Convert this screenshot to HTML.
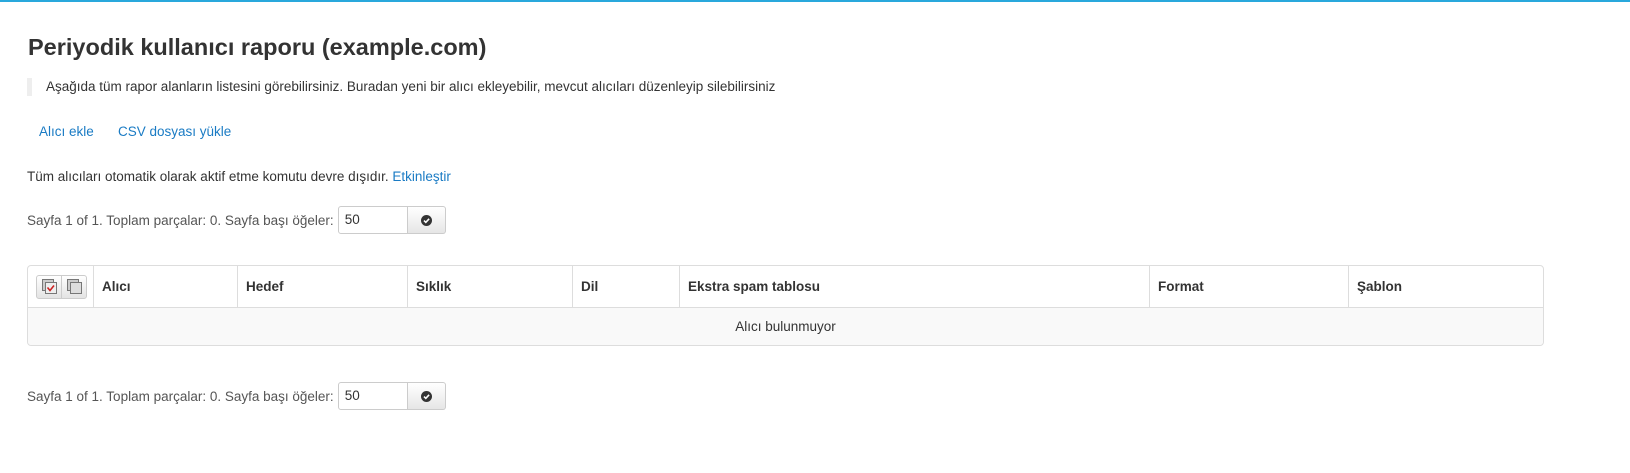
<!DOCTYPE html>
<html><head><meta charset="utf-8"><style>
body{margin:0;width:1630px;height:473px;background:#fff;font-family:"Liberation Sans",sans-serif;font-size:13.5px;color:#333;border-top:2px solid #29a8dc;box-sizing:border-box;position:relative;overflow:hidden}
.a{position:absolute;white-space:nowrap}
a{color:#1a7bc4;text-decoration:none}
h1{margin:0;font-size:23.5px;font-weight:bold;color:#333}
.pg{display:flex;align-items:center}
.inp{width:70px;height:28px;border:1px solid #ccc;border-radius:3px 0 0 3px;box-sizing:border-box;padding-left:6px;line-height:26px;margin-left:4px}
.btn{width:38px;height:28px;border:1px solid #ccc;border-left:none;border-radius:0 3px 3px 0;box-sizing:border-box;background:linear-gradient(#fff,#e6e6e6);display:flex;align-items:center;justify-content:center}
table{position:absolute;left:27px;top:263px;width:1517px;border-collapse:separate;border-spacing:0;border:1px solid #ddd;border-radius:4px;table-layout:fixed}
th{height:42px;text-align:left;padding:0 8px;font-weight:bold;border-left:1px solid #ddd;border-bottom:1px solid #ddd;box-sizing:border-box}
th:first-child{border-left:none}
td{height:35px;text-align:center;background:#f9f9f9;border-radius:0 0 4px 4px}
.cb{display:inline-flex;border:1px solid #ccc;border-radius:3px;background:linear-gradient(#fff,#e3e3e3);height:22px;vertical-align:middle}
.cb span{width:24px;display:flex;align-items:center;justify-content:center}
.cb span+span{border-left:1px solid #ccc}
</style></head><body>
<div class="a" style="left:28px;top:32px"><h1>Periyodik kullanıcı raporu (example.com)</h1></div>
<div class="a" style="left:27px;top:76px;height:18px;border-left:5px solid #eee;padding-left:14px;line-height:18px">Aşağıda tüm rapor alanların listesini görebilirsiniz. Buradan yeni bir alıcı ekleyebilir, mevcut alıcıları düzenleyip silebilirsiniz</div>
<div class="a" style="left:39px;top:122px"><a>Alıcı ekle</a></div>
<div class="a" style="left:118px;top:122px"><a>CSV dosyası yükle</a></div>
<div class="a" style="left:27px;top:167px">Tüm alıcıları otomatik olarak aktif etme komutu devre dışıdır. <a>Etkinleştir</a></div>
<div class="a pg" style="left:27px;top:204px"><span style="color:#555">Sayfa 1 of 1. Toplam parçalar: 0. Sayfa başı öğeler:</span><div class="inp">50</div><div class="btn"><svg width="11" height="11" viewBox="0 0 11 11"><circle cx="5.5" cy="5.5" r="5.5" fill="#333"/><path d="M3 5.6l1.8 1.8 3.3-3.6" stroke="#fff" stroke-width="1.6" fill="none"/></svg></div></div>
<table><tr>
<th style="width:65px;padding:0 0 0 8px"><span class="cb"><span><svg width="15" height="15" viewBox="0 0 15 15"><rect x="0.5" y="0.5" width="11" height="11" fill="#ccc" stroke="#777"/><rect x="3.5" y="3.5" width="11" height="11" fill="#eee" stroke="#777"/><path d="M5.5 8.5l2.5 3 4-5" stroke="#c22" stroke-width="1.6" fill="none"/></svg></span><span><svg width="15" height="15" viewBox="0 0 15 15"><rect x="0.5" y="0.5" width="11" height="11" fill="#ccc" stroke="#777"/><rect x="3.5" y="3.5" width="11" height="11" fill="#ddd" stroke="#777"/></svg></span></span></th>
<th style="width:144px">Alıcı</th><th style="width:170px">Hedef</th><th style="width:165px">Sıklık</th><th style="width:107px">Dil</th><th style="width:470px">Ekstra spam tablosu</th><th style="width:199px">Format</th><th>Şablon</th>
</tr><tr><td colspan="8">Alıcı bulunmuyor</td></tr></table>
<div class="a pg" style="left:27px;top:380px"><span style="color:#555">Sayfa 1 of 1. Toplam parçalar: 0. Sayfa başı öğeler:</span><div class="inp">50</div><div class="btn"><svg width="11" height="11" viewBox="0 0 11 11"><circle cx="5.5" cy="5.5" r="5.5" fill="#333"/><path d="M3 5.6l1.8 1.8 3.3-3.6" stroke="#fff" stroke-width="1.6" fill="none"/></svg></div></div>
</body></html>
